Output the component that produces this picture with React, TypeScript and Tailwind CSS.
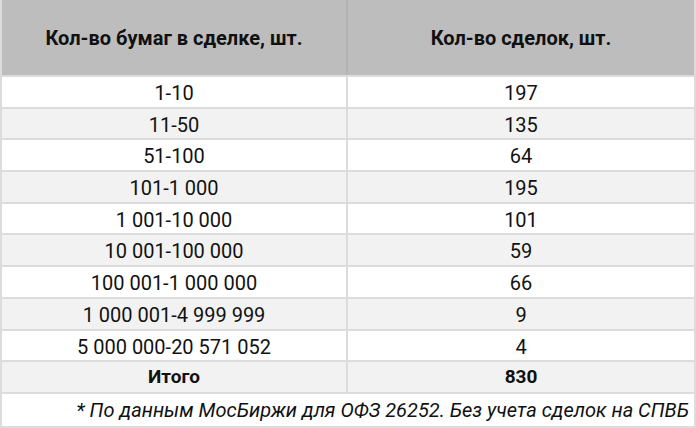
const rows: [string, string][] = [
  ["1-10", "197"],
  ["11-50", "135"],
  ["51-100", "64"],
  ["101-1 000", "195"],
  ["1 001-10 000", "101"],
  ["10 001-100 000", "59"],
  ["100 001-1 000 000", "66"],
  ["1 000 001-4 999 999", "9"],
  ["5 000 000-20 571 052", "4"],
];

export default function App() {
  return (
    <div
      className="w-[696px] h-[428px] bg-white text-[#111] overflow-hidden"
      style={{ fontFamily: "Roboto, 'Noto Sans', sans-serif" }}
    >
      <div className="flex h-full flex-col border-x-2 border-b-2 border-[#dcdcdc]">
        {/* header */}
        <div className="grid grid-cols-2 h-[75px] shrink-0 bg-[#bdbdbd] text-[20px] font-bold">
          <div className="flex items-center justify-center border-r-2 border-[#b3b3b3]">
            Кол-во бумаг в сделке, шт.
          </div>
          <div className="flex items-center justify-center">Кол-во сделок, шт.</div>
        </div>

        {rows.map(([a, b], i) => (
          <div
            key={a}
            className={`grid grid-cols-2 h-[31.7px] shrink-0 border-t-2 border-[#dcdcdc] text-[20px] ${
              i % 2 === 1 ? "bg-[#f2f2f2]" : "bg-white"
            }`}
          >
            <div className="flex items-center justify-center border-r-2 border-[#dcdcdc] pt-px">{a}</div>
            <div className="flex items-center justify-center pt-px">{b}</div>
          </div>
        ))}

        <div className="grid grid-cols-2 h-[31.7px] shrink-0 border-t-2 border-[#dcdcdc] bg-[#f2f2f2] text-[19px] font-bold">
          <div className="flex items-center justify-center border-r-2 border-[#dcdcdc] pt-px">Итого</div>
          <div className="flex items-center justify-center pt-px">830</div>
        </div>

        <div className="flex flex-1 items-center justify-end border-t-2 border-[#dcdcdc] pr-[5px] text-[20px] italic">
          * По данным МосБиржи для ОФЗ 26252. Без учета сделок на СПВБ
        </div>
      </div>
    </div>
  );
}
